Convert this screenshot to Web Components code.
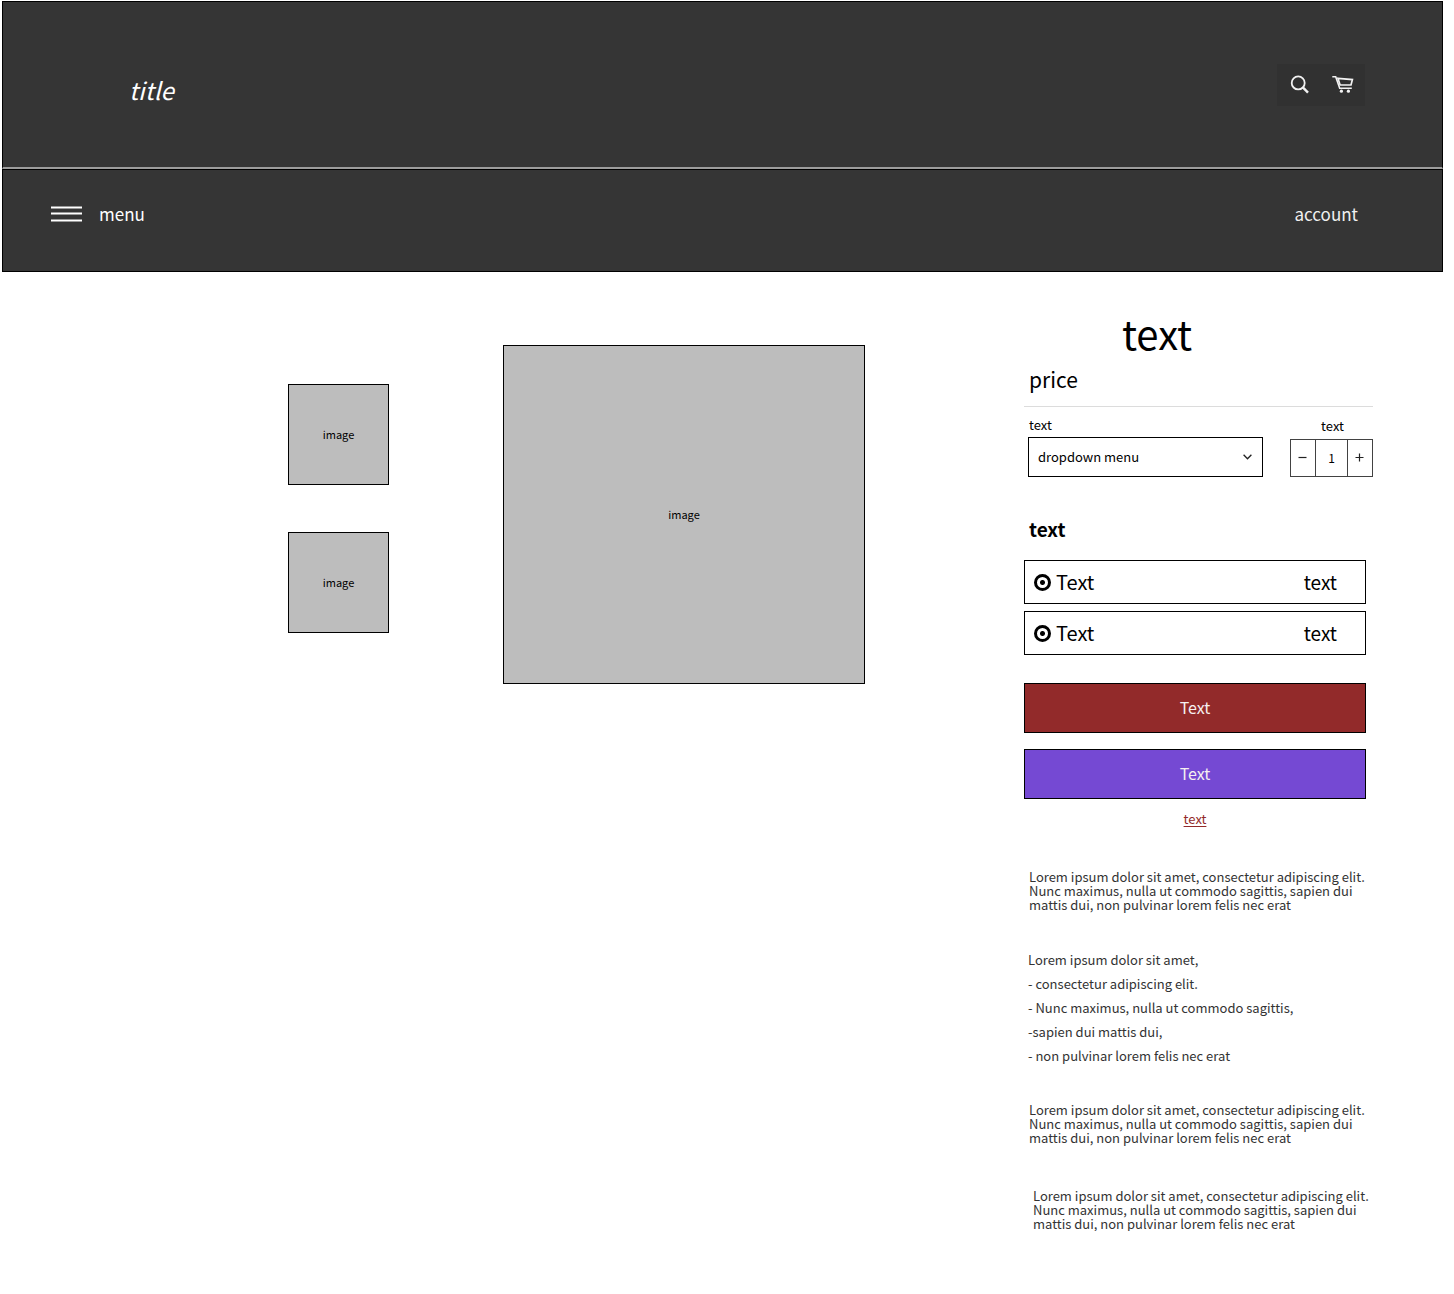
<!DOCTYPE html>
<html lang="en">
<head>
<meta charset="utf-8">
<meta name="viewport" content="width=device-width, initial-scale=1">
<title>Product page</title>
<style>
  body {
    margin: 1px 11px 0 2px;
    background: #fff;
    color: #000;
    font-family: "Noto Sans CJK SC", "Noto Sans", sans-serif;
    font-size: 13px;
    line-height: 20px;
  }
</style>
</head>
<body>
<shop-page></shop-page>

<template id="shop-page">
  <style>
    :host { display: block; }
    main {
      display: grid;
      grid-template-columns: 286fr 101fr 114fr 362fr 159fr 349fr 70fr;
      align-items: start;
    }
    .thumbs { grid-column: 2; display: flex; flex-direction: column; gap: 47px; padding-top: 112px; }
    .hero { grid-column: 4; padding-top: 73px; }
    product-panel { grid-column: 6; }
  </style>
  <shop-header>title</shop-header>
  <shop-nav></shop-nav>
  <main>
    <div class="thumbs">
      <image-box>image</image-box>
      <image-box>image</image-box>
    </div>
    <div class="hero"><image-box style="--ratio: 362 / 339">image</image-box></div>
    <product-panel></product-panel>
  </main>
</template>

<template id="shop-header">
  <style>
    :host { display: block; }
    header {
      box-sizing: border-box; height: 168px; padding: 0 77px 0 126px;
      display: flex; align-items: center; justify-content: space-between;
      background: #353535; color: #fff;
      border: 1px solid #000; border-bottom: 2px solid #9c9c9c;
    }
    h1 { margin: 0; padding-top: 10px; font-size: 24px; line-height: 32px; font-weight: 400; font-style: italic; }
    .tools { display: flex; background: #313131; }
    button {
      display: flex; align-items: center; justify-content: center;
      width: 44px; height: 42px; padding: 0; border: 0; background: none; color: #f2f2f2;
    }
    svg { display: block; fill: none; stroke: currentColor; }
  </style>
  <header>
    <h1><slot></slot></h1>
    <div class="tools">
      <button type="button" aria-label="Search">
        <svg width="20" height="20" viewBox="0 0 20 20"><circle cx="9.2" cy="7.9" r="6.5" stroke-width="1.8"/><path d="M13.6 12.2l5.4 5.4" stroke-width="2.4"/></svg>
      </button>
      <button type="button" aria-label="Cart">
        <svg width="22" height="20" viewBox="0 0 22 20"><path d="M.3 1.7H3.7L7.7 13.2H19.8" stroke-width="1.6"/><path d="M5.9 3.3L20.4 4.6 19 10H8.1z" stroke-width="1.7"/><circle cx="9.4" cy="16.2" r="1.6" fill="currentColor" stroke="none"/><circle cx="16.4" cy="16.2" r="1.6" fill="currentColor" stroke="none"/></svg>
      </button>
    </div>
  </header>
</template>

<template id="shop-nav">
  <style>
    :host { display: block; }
    nav {
      box-sizing: border-box; height: 103px; padding: 0 84px 14px 48px;
      display: flex; align-items: center; justify-content: space-between;
      background: #353535; border: 1px solid #000;
      font-size: 17px; line-height: 24px;
    }
    button {
      display: flex; align-items: center; gap: 17px; padding: 0;
      border: 0; background: none; color: #fff; font: inherit;
    }
    svg { display: block; }
    a { color: #f0f0f0; text-decoration: none; }
  </style>
  <nav>
    <button type="button">
      <svg width="31" height="16" viewBox="0 0 31 16" stroke="#fff" stroke-width="2"><path d="M0 1.5h31M0 7.6h31M0 14.5h31"/></svg>
      menu
    </button>
    <a href="#account">account</a>
  </nav>
</template>

<template id="image-box">
  <style>
    :host {
      box-sizing: border-box; display: flex; align-items: center; justify-content: center;
      aspect-ratio: var(--ratio, 1 / 1); padding-bottom: 2px;
      background: #bdbdbd; border: 1px solid #000; font-size: 11px; line-height: 16px;
    }
  </style>
  <slot></slot>
</template>

<template id="product-panel">
  <style>
    :host { display: block; padding-top: 37px; }
    h2 { margin: 0 83px 0 0; text-align: center; font-size: 40px; line-height: 48px; font-weight: 400; }
    .price { margin: 8px 0 13px; padding-left: 5px; font-size: 21px; line-height: 28px; }
    hr { margin: 0; border: 0; border-top: 1px solid #dcdcdc; }
    .fields { display: flex; justify-content: space-between; padding: 8px 0 0 4px; }
    variant-select { flex: 0 1 235px; }
    h3 { margin: 40px 0 19px; padding-left: 5px; font-size: 19px; line-height: 24px; font-weight: 700; }
    .column { padding-right: 7px; }
    .options { display: flex; flex-direction: column; gap: 7px; }
    .actions { display: flex; flex-direction: column; gap: 16px; margin: 28px 0 10px; }
    .more { text-align: center; }
    a { color: #922a2a; text-underline-offset: 2px; }
    .copy { margin: 41px 0 0; padding-left: 5px; line-height: 14px; color: #333; }
    .list { margin: 36px 0 35px; padding-left: 4px; line-height: 24px; color: #333; }
    .list p { margin: 0; }
    .list + .copy { margin-top: 0; }
    .copy.last { margin-top: 44px; padding-left: 9px; }
  </style>
  <h2>text</h2>
  <div class="price">price</div>
  <hr>
  <div class="fields">
    <variant-select></variant-select>
    <quantity-stepper></quantity-stepper>
  </div>
  <h3>text</h3>
  <div class="column">
    <div class="options">
      <purchase-option name="plan-a"><span>Text</span><span slot="detail">text</span></purchase-option>
      <purchase-option name="plan-b"><span>Text</span><span slot="detail">text</span></purchase-option>
    </div>
    <div class="actions">
      <action-button style="--fill: #922a2a">Text</action-button>
      <action-button style="--fill: #7549d3">Text</action-button>
    </div>
    <div class="more"><a href="#more">text</a></div>
  </div>
  <p class="copy">Lorem ipsum dolor sit amet, consectetur adipiscing elit. Nunc maximus, nulla ut commodo sagittis, sapien dui mattis dui, non pulvinar lorem felis nec erat</p>
  <div class="list">
    <p>Lorem ipsum dolor sit amet,</p>
    <p>- consectetur adipiscing elit.</p>
    <p>- Nunc maximus, nulla ut commodo sagittis,</p>
    <p>-sapien dui mattis dui,</p>
    <p>- non pulvinar lorem felis nec erat</p>
  </div>
  <p class="copy">Lorem ipsum dolor sit amet, consectetur adipiscing elit. Nunc maximus, nulla ut commodo sagittis, sapien dui mattis dui, non pulvinar lorem felis nec erat</p>
  <p class="copy last">Lorem ipsum dolor sit amet, consectetur adipiscing elit. Nunc maximus, nulla ut commodo sagittis, sapien dui mattis dui, non pulvinar lorem felis nec erat</p>
</template>

<template id="variant-select">
  <style>
    :host { display: block; }
    label { display: block; margin-bottom: 2px; padding-left: 1px; }
    .box { display: grid; align-items: center; }
    select, svg { grid-area: 1 / 1; }
    select {
      appearance: none; box-sizing: border-box; width: 100%; height: 40px; margin: 0; padding: 0 28px 0 9px;
      border: 1px solid #000; border-radius: 0; background: #fff; color: #000; font: inherit;
    }
    svg { justify-self: end; margin-right: 11px; pointer-events: none; }
  </style>
  <label for="variant">text</label>
  <div class="box">
    <select id="variant"><option>dropdown menu</option></select>
    <svg width="9" height="6" viewBox="0 0 9 6" fill="none" stroke="#222" stroke-width="1.3"><path d="M.6.7l3.9 4 3.9-4"/></svg>
  </div>
</template>

<template id="quantity-stepper">
  <style>
    :host { display: block; padding-top: 1px; }
    label { display: block; margin: 0 0 3px 2px; text-align: center; }
    .row { box-sizing: border-box; display: flex; width: 83px; height: 38px; border: 1px solid #424242; }
    button, input { box-sizing: border-box; margin: 0; padding: 0; border: 0; border-radius: 0; background: #fff; color: #000; font: inherit; font-size: 12px; }
    button { flex: 0 0 24px; display: flex; align-items: center; justify-content: center; }
    input { flex: 1; min-width: 0; text-align: center; border: solid #424242; border-width: 0 1px; }
    svg { display: block; stroke: #222; stroke-width: 1.2; }
  </style>
  <label for="quantity">text</label>
  <div class="row">
    <button type="button" aria-label="Decrease"><svg width="10" height="10" viewBox="0 0 10 10"><path d="M.5 4.5h8"/></svg></button>
    <input id="quantity" type="text" inputmode="numeric" value="1">
    <button type="button" aria-label="Increase"><svg width="10" height="10" viewBox="0 0 10 10"><path d="M.5 4.5h8M4.5.5v8"/></svg></button>
  </div>
</template>

<template id="purchase-option">
  <style>
    :host { display: block; }
    label {
      box-sizing: border-box; height: 44px; padding: 0 28px 0 9px;
      display: flex; align-items: center; gap: 5px;
      border: 1px solid #000; background: #fff; font-size: 20px; line-height: 28px;
    }
    input {
      appearance: none; box-sizing: border-box; width: 17px; height: 17px; margin: 0;
      border: 3px solid #000; border-radius: 50%;
      background: radial-gradient(circle, #000 2px, #fff 3px);
    }
    .detail { margin-left: auto; font-size: 19px; }
  </style>
  <label><input type="radio" checked><slot></slot><span class="detail"><slot name="detail"></slot></span></label>
</template>

<template id="action-button">
  <style>
    :host { display: block; }
    button {
      box-sizing: border-box; width: 100%; height: 50px; padding: 0 0 2px;
      border: 1px solid #000; background: var(--fill); color: #f6f0f0;
      font: inherit; font-size: 16px; line-height: 24px;
    }
  </style>
  <button type="button"><slot></slot></button>
</template>

<script>
  class TemplateElement extends HTMLElement {
    constructor() {
      super();
      const template = document.getElementById(this.localName);
      this.attachShadow({ mode: "open" }).append(template.content.cloneNode(true));
    }
  }

  class QuantityStepper extends TemplateElement {
    connectedCallback() {
      const input = this.shadowRoot.querySelector("input");
      const [minus, plus] = this.shadowRoot.querySelectorAll("button");
      minus.onclick = () => { input.value = Math.max(1, Number(input.value) - 1); };
      plus.onclick = () => { input.value = Number(input.value) + 1; };
    }
  }

  class PurchaseOption extends TemplateElement {
    connectedCallback() {
      this.shadowRoot.querySelector("input").name = this.getAttribute("name");
    }
  }

  customElements.define("image-box", class extends TemplateElement {});
  customElements.define("action-button", class extends TemplateElement {});
  customElements.define("variant-select", class extends TemplateElement {});
  customElements.define("quantity-stepper", QuantityStepper);
  customElements.define("purchase-option", PurchaseOption);
  customElements.define("product-panel", class extends TemplateElement {});
  customElements.define("shop-header", class extends TemplateElement {});
  customElements.define("shop-nav", class extends TemplateElement {});
  customElements.define("shop-page", class extends TemplateElement {});
</script>
</body>
</html>
